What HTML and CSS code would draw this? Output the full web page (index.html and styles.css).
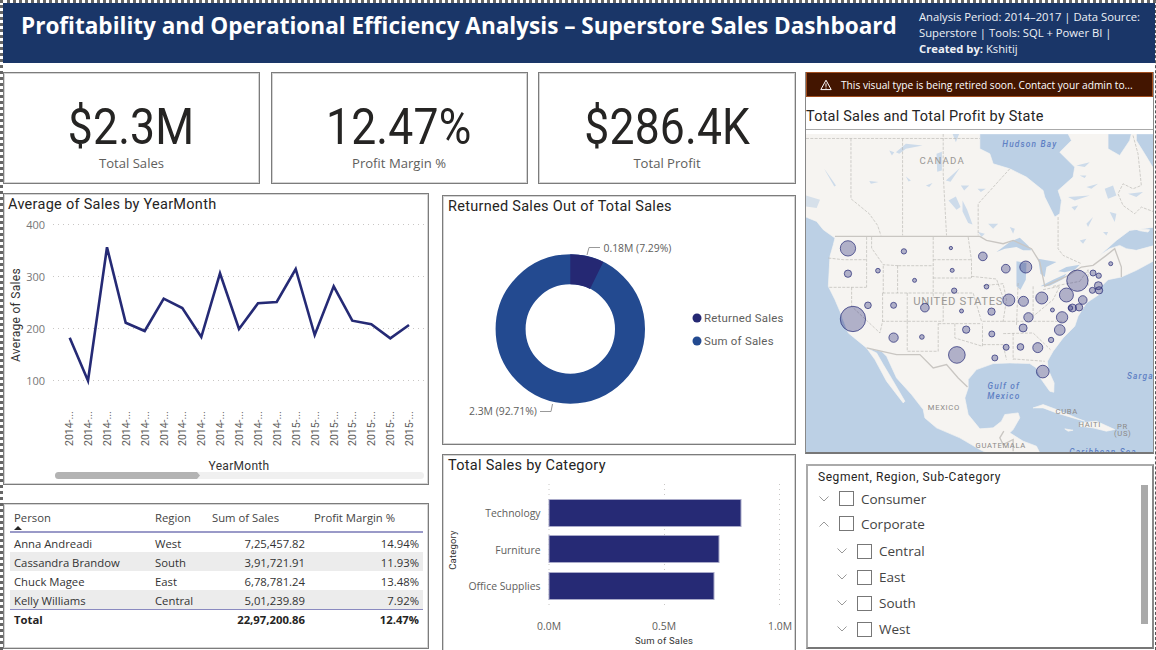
FILE: index.html
```html
<!DOCTYPE html>
<html lang="en">
<head>
<meta charset="utf-8">
<title>Superstore Sales Dashboard</title>
<link rel="stylesheet" href="styles.css">
</head>
<body>
<div class="page">
  <header class="banner">
    <h1 class="banner-title">Profitability and Operational Efficiency Analysis – Superstore Sales Dashboard</h1>
    <p class="banner-meta">Analysis Period: 2014–2017 | Data Source: Superstore | Tools: SQL + Power BI | <b>Created by:</b> Kshitij</p>
  </header>
  <div class="body">
    <main class="main">
      <section class="kpis">
        <div class="card kpi"><div class="kpi-value">$2.3M</div><div class="kpi-label">Total Sales</div></div>
        <div class="card kpi"><div class="kpi-value">12.47%</div><div class="kpi-label">Profit Margin %</div></div>
        <div class="card kpi"><div class="kpi-value">$286.4K</div><div class="kpi-label">Total Profit</div></div>
      </section>
      <section class="lower">
        <div class="col-left">
          <div class="card line-card">
            <h2 class="visual-title">Average of Sales by YearMonth</h2>
            <svg class="chart" viewBox="5 214 422 270" width="422" height="270">
              <g class="grid-dots">
                <line x1="53" y1="224.5" x2="424" y2="224.5"/>
                <line x1="53" y1="276.5" x2="424" y2="276.5"/>
                <line x1="53" y1="328.5" x2="424" y2="328.5"/>
                <line x1="53" y1="380.5" x2="424" y2="380.5"/>
              </g>
              <g class="axis-num" text-anchor="end">
                <text x="45" y="228.5">400</text>
                <text x="45" y="280.5">300</text>
                <text x="45" y="332.5">200</text>
                <text x="45" y="384.5">100</text>
              </g>
              <text class="axis-title" transform="translate(20 315) rotate(-90)" text-anchor="middle">Average of Sales</text>
              <polyline class="series" points="69.7,337.7 88,380.7 107,247.3 125.7,322.7 144.7,331 163.7,298.7 182.3,308 201.3,337 220,273.3 239,329 258,303.3 276.7,302 295.7,269 314.7,335 333.7,286.3 352.3,320.7 371.3,324.3 390.3,338.3 409,325"/>
              <g class="axis-x" text-anchor="start">
                <text transform="translate(73 446) rotate(-90)">2014-...</text>
                <text transform="translate(92 446) rotate(-90)">2014-...</text>
                <text transform="translate(111 446) rotate(-90)">2014-...</text>
                <text transform="translate(130 446) rotate(-90)">2014-...</text>
                <text transform="translate(149 446) rotate(-90)">2014-...</text>
                <text transform="translate(168 446) rotate(-90)">2014-...</text>
                <text transform="translate(186 446) rotate(-90)">2014-...</text>
                <text transform="translate(205 446) rotate(-90)">2014-...</text>
                <text transform="translate(224 446) rotate(-90)">2014-...</text>
                <text transform="translate(243 446) rotate(-90)">2014-...</text>
                <text transform="translate(262 446) rotate(-90)">2014-...</text>
                <text transform="translate(281 446) rotate(-90)">2014-...</text>
                <text transform="translate(300 446) rotate(-90)">2015-...</text>
                <text transform="translate(319 446) rotate(-90)">2015-...</text>
                <text transform="translate(338 446) rotate(-90)">2015-...</text>
                <text transform="translate(356 446) rotate(-90)">2015-...</text>
                <text transform="translate(375 446) rotate(-90)">2015-...</text>
                <text transform="translate(394 446) rotate(-90)">2015-...</text>
                <text transform="translate(413 446) rotate(-90)">2015-...</text>
              </g>
              <text class="axis-title" x="239" y="470" text-anchor="middle">YearMonth</text>
              <rect class="scroll-track" x="55" y="472" width="369" height="7" rx="3.5"/>
              <path class="scroll-thumb" d="M58.5 472H197L200 475.5L197 479H58.5a3.5 3.5 0 0 1 0-7z"/>
            </svg>
          </div>
          <div class="card table-card">
            <div class="tbl-row tbl-head">
              <span class="sort-cell">Person<i class="sort-arrow"></i></span><span>Region</span><span>Sum of Sales</span><span>Profit Margin %</span>
            </div>
            <div class="tbl-row"><span>Anna Andreadi</span><span>West</span><span class="num">7,25,457.82</span><span class="num">14.94%</span></div>
            <div class="tbl-row alt"><span>Cassandra Brandow</span><span>South</span><span class="num">3,91,721.91</span><span class="num">11.93%</span></div>
            <div class="tbl-row"><span>Chuck Magee</span><span>East</span><span class="num">6,78,781.24</span><span class="num">13.48%</span></div>
            <div class="tbl-row alt"><span>Kelly Williams</span><span>Central</span><span class="num">5,01,239.89</span><span class="num">7.92%</span></div>
            <div class="tbl-row tbl-total"><span>Total</span><span></span><span class="num">22,97,200.86</span><span class="num">12.47%</span></div>
          </div>
        </div>
        <div class="col-right">
          <div class="card donut-card">
            <h2 class="visual-title">Returned Sales Out of Total Sales</h2>
            <svg class="chart" viewBox="444 216 350 228" width="350" height="228">
              <circle class="ring" cx="570.3" cy="329" r="59.7"/>
              <path class="ring-part" d="M570.3 254.3A74.7 74.7 0 0 1 603.3 262L590 288.9A44.7 44.7 0 0 0 570.3 284.3Z"/>
              <polyline class="leader" points="587,255 589,247.5 600,247.5"/>
              <polyline class="leader" points="540,411.5 551,411.5 552.5,404"/>
              <text class="data-label" x="603.5" y="252">0.18M (7.29%)</text>
              <text class="data-label" x="469" y="415">2.3M (92.71%)</text>
              <circle class="dot-dark" cx="697" cy="318" r="4.5"/>
              <circle class="dot-blue" cx="697" cy="341" r="4.5"/>
              <text class="legend" x="704" y="322">Returned Sales</text>
              <text class="legend" x="704" y="345">Sum of Sales</text>
            </svg>
          </div>
          <div class="card bar-card">
            <h2 class="visual-title">Total Sales by Category</h2>
            <svg class="chart" viewBox="444 475 350 175" width="350" height="175">
              <g class="grid-dots">
                <line x1="549" y1="484" x2="549" y2="606"/>
                <line x1="664.5" y1="484" x2="664.5" y2="606"/>
                <line x1="779.5" y1="484" x2="779.5" y2="606"/>
              </g>
              <rect class="bar" x="549" y="499.5" width="192" height="27"/>
              <rect class="bar" x="549" y="535.5" width="170" height="27"/>
              <rect class="bar" x="549" y="572.5" width="165" height="27"/>
              <g class="data-label" text-anchor="end">
                <text x="540.5" y="517">Technology</text>
                <text x="540.5" y="554">Furniture</text>
                <text x="540.5" y="590">Office Supplies</text>
              </g>
              <g class="data-label" text-anchor="middle">
                <text x="549" y="630">0.0M</text>
                <text x="664" y="630">0.5M</text>
                <text x="780" y="630">1.0M</text>
              </g>
              <text class="axis-small" x="664" y="644" text-anchor="middle">Sum of Sales</text>
              <text class="axis-small" transform="translate(456 550) rotate(-90)" text-anchor="middle">Category</text>
            </svg>
          </div>
        </div>
      </section>
    </main>
    <aside class="side">
      <div class="map-card">
        <div class="warn">
          <svg class="warn-icon" viewBox="0 0 12 12" width="12" height="12"><path d="M6 1.2 11.2 10.6H.8Z"/><path d="M6 4.4v3.4M6 8.6v1"/></svg>
          <span>This visual type is being retired soon. Contact your admin to...</span>
        </div>
        <div class="map-title">Total Sales and Total Profit by State</div>
        <svg class="map" viewBox="18 13 1042 954" width="347" height="318">
          <rect class="water" x="18" y="13" width="1042" height="957"/>
          <g class="geo">
            <path class="land" d="M18 12H540V57L570 72L580 102L630 117L680 142L730 182L735 202L765 262L780 252L785 212L775 182L820 142L825 112L780 67L815 32L805 12H925V57L960 77L990 32L995 12H1010V32L1035 72L1065 122V292L990 302L950 332L900 377L930 357L960 347L980 357L1010 362L1065 347V392L1010 422L965 442L925 450L905 470L905 490L860 520L835 560L825 590L790 625L760 665L743 695L745 720L763 760L762 788L750 785L725 750L710 715L690 702L630 700L580 702L530 720L505 750L505 775L495 805L505 855L540 898L580 895L605 875L615 855L655 850L660 865L640 900L630 910L670 935L710 950L720 970H560L540 960L480 925L410 895L375 865L370 840L335 795L290 745L260 680L245 665L200 655L145 610L120 545L105 510L85 470L90 380L100 345L105 325L70 300L50 275L18 262Z"/>
            <path class="land" d="M200 655 225 690 260 755 310 820 315 815 280 755 250 705 230 670ZM700 835 730 825 770 840 830 865 855 875 820 865 770 850 730 835ZM840 880 890 875 945 900 920 905 880 895 840 890ZM795 898 820 902 805 905ZM1005 297 1050 300 1045 307 1020 303Z"/>
            <path class="coast-inlet" d="M18 197L60 210L50 235L18 230Z"/>
            <path class="lake-main" d="M590 367 630 337 660 324 685 347 695 362 670 362 650 352 615 357ZM715 387 770 397 740 412 735 442 722 432ZM650 395 680 400 678 450 662 480 650 470 650 430ZM722 470 760 450 800 432 790 448 750 468ZM775 425 800 412 840 405 825 420 795 428Z"/>
            <path class="lake" d="M446 212 468 200 482 232 470 240ZM488 212 502 240 518 284 505 280 488 245ZM288 67 318 42 368 47 318 57 298 72ZM268 62 283 67 276 77ZM410 72 426 66 426 122 412 126ZM438 152 480 115 452 156ZM458 12 478 12 468 37ZM73 117 108 167 103 170 78 127ZM208 154 236 157 213 162ZM318 140 333 152 326 155ZM378 167 398 160 388 172ZM483 167 508 167 493 182ZM533 177 558 177 543 187ZM830 107 870 97 855 112ZM840 137 860 137 855 145ZM860 172 895 162 875 177ZM805 202 870 197 825 212ZM815 232 835 227 825 242ZM915 177 940 167 950 197 925 207ZM985 192 1030 187 1010 202ZM930 247 950 252 945 277ZM860 282 880 262 865 292ZM840 332 860 327 850 342ZM910 307 925 307 920 317ZM565 282 595 282 580 297ZM630 292 645 297 640 312ZM535 307 555 312 545 322Z"/>
          </g>
          <path class="state" d="M18 26H540M153 26V207L208 252L233 287L243 317M308 26V317M430 12V132L440 317M630 117L535 222V317M775 262V357L790 377L845 402M1000 17L1015 72L1025 167L1000 177L970 162L955 192L970 227L1005 252L1025 232L1065 247M85 385L130 390L200 390M200 322V472M88 473H200M155 473V530L240 610M215 322V355L250 405L295 408M250 408V490M293 408V490M400 322V505M295 408H400M400 390H515M400 445H515M505 322L515 392L515 445M248 490H430V575H248M248 490V575L240 610M322 490V575M322 575V665H415V582M415 582H545M465 582V625L548 650V582M430 490H520L545 575H610M515 440L590 448L612 510M550 468L610 462L620 510L610 575M655 460L650 590M700 470L700 560M730 480L780 470L760 510L700 560M610 575H800M550 645H610L620 690M640 610V690M610 612L700 610L752 660M640 688L735 695M760 470L840 455M840 455L865 420M865 420V470"/>
          <path class="border" d="M105 320H540L560 332L610 342L640 332L695 357L720 397L735 470L800 440L845 412L880 407L920 377L945 357L965 412V442M200 655L290 675H360L400 715L440 705L475 745L503 772M612 905L600 925L610 945L640 930V965"/>
          <g class="map-label">
            <text x="427" y="104" text-anchor="middle">CANADA</text>
            <text x="475" y="527" text-anchor="middle" class="big">UNITED STATES</text>
            <text x="432" y="842" text-anchor="middle" class="sm">MEXICO</text>
            <text x="801" y="854" text-anchor="middle" class="sm">CUBA</text>
            <text x="870" y="892" text-anchor="middle" class="sm">HAITI</text>
            <text x="968" y="897" text-anchor="middle" class="sm">PR</text>
            <text x="969" y="918" text-anchor="middle" class="sm">(US)</text>
            <text x="603" y="956" text-anchor="middle" class="sm">GUATEMALA</text>
          </g>
          <g class="sea-label" text-anchor="middle">
            <text x="690" y="53">Hudson Bay</text>
            <text x="612" y="777">Gulf of</text>
            <text x="612" y="807">Mexico</text>
            <text x="1022" y="748">Sarga</text>
            <text x="910" y="978">Caribbean Sea</text>
          </g>
          <g class="bubbles">
            <circle cx="144" cy="356" r="23"/><circle cx="312" cy="365" r="8"/><circle cx="453" cy="355" r="5"/><circle cx="549" cy="380" r="13"/><circle cx="618" cy="417" r="13"/><circle cx="678" cy="412" r="18"/><circle cx="144" cy="432" r="11"/><circle cx="234" cy="423" r="7"/><circle cx="457" cy="422" r="6"/><circle cx="344" cy="452" r="6"/><circle cx="560" cy="471" r="7"/><circle cx="463" cy="483" r="8"/><circle cx="833" cy="453" r="32"/><circle cx="880" cy="430" r="9"/><circle cx="897" cy="438" r="8"/><circle cx="933" cy="402" r="6"/><circle cx="896" cy="468" r="12"/><circle cx="878" cy="482" r="9"/><circle cx="898" cy="482" r="11"/><circle cx="800" cy="496" r="21"/><circle cx="849" cy="511" r="13"/><circle cx="726" cy="505" r="18"/><circle cx="627" cy="511" r="18"/><circle cx="671" cy="515" r="15"/><circle cx="204" cy="527" r="10"/><circle cx="281" cy="527" r="9"/><circle cx="375" cy="534" r="13"/><circle cx="485" cy="544" r="6"/><circle cx="575" cy="546" r="11"/><circle cx="758" cy="541" r="6"/><circle cx="818" cy="535" r="12"/><circle cx="812" cy="535" r="7"/><circle cx="838" cy="533" r="11"/><circle cx="159" cy="568" r="38"/><circle cx="787" cy="563" r="17"/><circle cx="686" cy="563" r="14"/><circle cx="670" cy="595" r="12"/><circle cx="780" cy="601" r="16"/><circle cx="499" cy="600" r="11"/><circle cx="576" cy="613" r="9"/><circle cx="754" cy="631" r="8"/><circle cx="366" cy="622" r="7"/><circle cx="281" cy="624" r="14"/><circle cx="619" cy="653" r="9"/><circle cx="662" cy="652" r="10"/><circle cx="714" cy="654" r="15"/><circle cx="471" cy="676" r="25"/><circle cx="585" cy="685" r="9"/><circle cx="729" cy="726" r="19"/>
          </g>
        </svg>
      </div>
      <div class="slicer">
        <div class="slicer-head">Segment, Region, Sub-Category</div>
        <div class="tree">
          <div class="node"><svg class="chev" viewBox="0 0 10 6" width="10" height="6"><path d="M.5.5 5 5 9.500.5"/></svg><i class="box"></i><span>Consumer</span></div>
          <div class="node"><svg class="chev" viewBox="0 0 10 6" width="10" height="6"><path d="M.5 5.500 5 1 9.500 5.500"/></svg><i class="box"></i><span>Corporate</span></div>
          <div class="node sub"><svg class="chev" viewBox="0 0 10 6" width="10" height="6"><path d="M.5.5 5 5 9.500.5"/></svg><i class="box"></i><span>Central</span></div>
          <div class="node sub"><svg class="chev" viewBox="0 0 10 6" width="10" height="6"><path d="M.5.5 5 5 9.500.5"/></svg><i class="box"></i><span>East</span></div>
          <div class="node sub"><svg class="chev" viewBox="0 0 10 6" width="10" height="6"><path d="M.5.5 5 5 9.500.5"/></svg><i class="box"></i><span>South</span></div>
          <div class="node sub"><svg class="chev" viewBox="0 0 10 6" width="10" height="6"><path d="M.5.5 5 5 9.500.5"/></svg><i class="box"></i><span>West</span></div>
        </div>
        <i class="slicer-thumb"></i>
      </div>
    </aside>
  </div>
</div>
</body>
</html>
```

FILE: styles.css
```css
* { box-sizing: border-box; }
html, body { margin: 0; padding: 0; background: #fff; }
body { width: 1156px; height: 650px; overflow: hidden; font-family: "Open Sans", "Liberation Sans", sans-serif; color: #252423; }
svg { display: block; }

.page { width: 1156px; height: 650px; overflow: hidden; border-left: 3px dotted #666; border-top: 3px dotted #666; border-right: 1px dashed #555; }

.banner { height: 60px; background: #1a3668; color: #fff; display: flex; }
.banner-title { margin: 8px 0 0 18px; width: 898px; font-size: 22.55px; line-height: 30px; font-weight: 700; white-space: nowrap; }
.banner-meta { margin: 6px 0 0 0; width: 228px; font-size: 11.25px; line-height: 16px; color: #eef1f6; }
.banner-meta b { font-weight: 700; }

.body { display: flex; gap: 9px; padding-top: 8px; }
.main { width: 793px; padding-top: 1px; }
.side { width: 349px; padding-top: 1px; display: flex; flex-direction: column; gap: 10px; }

.card { background: #fff; border: 1px solid #7c7c7c; padding: 1px; box-shadow: inset 0 0 0 1px #d4d4d4; }
.kpis { display: grid; grid-template-columns: 257px 257px 258px; column-gap: 10.5px; }
.kpi { height: 112px; text-align: center; display: flex; flex-direction: column; align-items: center; }
.kpi-value { font-family: Roboto, sans-serif; font-size: 50px; line-height: 58px; margin-top: 24px; color: #252423; letter-spacing: .2px; transform: scaleX(.89); }
.kpi-label { font-size: 13.1px; line-height: 18px; margin-top: -2px; color: #605e5c; }

.lower { display: grid; grid-template-columns: 426px 354px; column-gap: 13px; }
.col-left { padding-top: 9px; display: flex; flex-direction: column; gap: 18px; }
.col-right { padding-top: 11px; display: flex; flex-direction: column; gap: 9px; }

.visual-title { margin: 0; padding-left: 4px; font-family: Roboto, sans-serif; font-weight: 400; font-size: 14.5px; line-height: 19px; color: #252423; letter-spacing: .28px; white-space: nowrap; }
.line-card { height: 292px; }
.line-card .visual-title { padding-left: 3px; }
.donut-card { height: 250px; }
.bar-card { height: 200px; }

.grid-dots line { stroke: #c8c6c4; stroke-width: 1; stroke-dasharray: 1 4; }
.axis-num { font: 11px "Open Sans", sans-serif; fill: #777; }
.axis-title { font: 12px Roboto, sans-serif; fill: #333; letter-spacing: .3px; }
.axis-x { font: 10.5px Roboto, sans-serif; fill: #605e5c; }
.axis-small { font: 9.5px Roboto, sans-serif; fill: #333; letter-spacing: .2px; }
.series { fill: none; stroke: #252a75; stroke-width: 2.6; stroke-linejoin: miter; }
.scroll-track { fill: #f0f0f0; }
.scroll-thumb { fill: #b3b3b3; }

.table-card { height: 146px; padding: 2px 5px 0 6px; font-size: 11.3px; color: #333; }
.tbl-row { display: grid; grid-template-columns: 141px 58px 92px 114px; height: 19px; align-items: center; padding: 1px 0 0 4px; white-space: nowrap; }
.tbl-row.alt { background: #ececec; }
.num { text-align: right; }
.tbl-head { height: 27px; border-bottom: 2px solid #9a9ac8; padding-top: 0; padding-bottom: 3px; color: #444; }
.tbl-head span:nth-child(3) { margin-left: -1px; }
.tbl-head span:nth-child(4) { padding-left: 9px; }
.sort-cell { position: relative; }
.sort-arrow { position: absolute; left: 0; top: 16px; width: 0; height: 0; border-left: 4px solid transparent; border-right: 4px solid transparent; border-bottom: 4px solid #252423; }
.tbl-total { font-weight: 700; color: #252423; border-top: 1px solid #8a8ac0; height: 20px; padding-top: 0; }

.ring { fill: none; stroke: #234a90; stroke-width: 30; }
.ring-part { fill: #252873; }
.leader { fill: none; stroke: #999; stroke-width: 1; }
.data-label { font: 10.4px "Open Sans", sans-serif; fill: #605e5c; }
.legend { font: 11.4px Roboto, sans-serif; fill: #605e5c; letter-spacing: .25px; }
.dot-dark { fill: #252873; }
.dot-blue { fill: #234a90; }
.bar { fill: #262a75; stroke: #a9aac9; stroke-width: 1; }

.map-card { height: 382px; border-left: 1px solid #888; border-right: 1px solid #888; border-bottom: 2px solid #777; display: flex; flex-direction: column; }
.warn { height: 25px; flex: none; background: #431500; border: 1px solid #a34e1f; color: #fff; font-size: 10.2px; display: flex; align-items: center; gap: 9px; padding-left: 13px; white-space: nowrap; }
.warn-icon path { fill: none; stroke: #fff; stroke-width: 1; }
.map-title { height: 33px; flex: none; border-bottom: 1px solid #aaa; font-family: Roboto, sans-serif; font-size: 14.5px; line-height: 40px; color: #252423; letter-spacing: .22px; white-space: nowrap; }
.map { margin-top: 4px; flex: none; }
.water { fill: #bcd0e5; }
.geo { filter: blur(.4px); }
.land { fill: #f6f4f1; stroke: #f6f4f1; stroke-width: 2; stroke-linejoin: round; }
.coast-inlet { fill: #d6e0ea; }
.lake-main { fill: #bcd0e5; }
.lake { fill: #cddbea; }
.state { fill: none; stroke: #b4b1ad; stroke-width: 1.8; stroke-dasharray: 9 4; }
.border { fill: none; stroke: #c9c6c2; stroke-width: 4; }
.map-label text { font: 29px Roboto, sans-serif; fill: #9a9895; letter-spacing: 3.5px; }
.map-label .big { font-size: 34px; letter-spacing: 2px; }
.map-label .sm { font-size: 23px; letter-spacing: 2px; fill: #8c8a88; }
.sea-label text { font: italic 500 25px Roboto, sans-serif; fill: #5f80c4; letter-spacing: 3.5px; }
.bubbles circle { fill: rgba(40, 44, 120, .34); stroke: #2a2e78; stroke-width: 2.2; }

.slicer { position: relative; height: 185px; margin-left: 1px; border: 2px solid #aaa; border-right-color: #888; border-bottom-color: #777; padding: 4px 10px; }
.slicer-head { font-family: Roboto, sans-serif; font-size: 12px; line-height: 14px; letter-spacing: .55px; color: #252423; white-space: nowrap; }
.tree { margin-top: 2px; }
.node { display: flex; align-items: center; height: 25px; font-size: 13.5px; color: #444; }
.node.sub { height: 26px; padding-left: 18px; }
.node:nth-child(3) { margin-top: 2px; }
.chev { fill: none; stroke: #999; stroke-width: 1; margin-right: 10px; margin-left: 1px; }
.box { width: 15px; height: 15px; border: 1px solid #777; margin-right: 7px; flex: none; }
.slicer-thumb { position: absolute; right: 4px; top: 19px; width: 7px; height: 139px; background: #aaa; }
```
